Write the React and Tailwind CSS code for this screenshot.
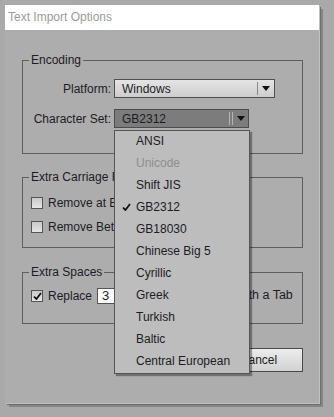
import React from "react";

const CHARSETS = [
  { label: "ANSI" },
  { label: "Unicode", disabled: true },
  { label: "Shift JIS" },
  { label: "GB2312", checked: true },
  { label: "GB18030" },
  { label: "Chinese Big 5" },
  { label: "Cyrillic" },
  { label: "Greek" },
  { label: "Turkish" },
  { label: "Baltic" },
  { label: "Central European" },
];

function Arrow() {
  return (
    <svg width="8" height="5" viewBox="0 0 8 5">
      <path d="M0 0 H8 L4 5 Z" fill="#111" />
    </svg>
  );
}

function Check() {
  return (
    <svg width="9" height="8" viewBox="0 0 9 8">
      <path d="M1 4.5 L3.4 7 L8 1" fill="none" stroke="#111" strokeWidth="1.8" />
    </svg>
  );
}

function Checkbox({ checked }) {
  return (
    <span className="flex h-[12px] w-[12px] shrink-0 items-center justify-center border border-[#555] bg-gradient-to-b from-[#c9c9c9] to-[#e6e6e6]">
      {checked && <Check />}
    </span>
  );
}

function Group({ title, className, children }) {
  return (
    <fieldset className={`ml-[17px] w-[281px] border border-[#5e5e5e] pl-[6px] ${className}`}>
      <legend className="px-[2px] leading-[16px]">{title}</legend>
      <div className="pl-[2px]">{children}</div>
    </fieldset>
  );
}

export default function App() {
  return (
    <div className="h-[417px] w-[334px] bg-[#a9a9a9] p-[5px] font-['Liberation_Sans',Arial,sans-serif] text-[12px] text-[#1c1c24]">
      <div className="relative h-[398px] w-[314px] bg-[#adadad] shadow-[1px_1px_0_#bfbfbf,2px_2px_0_#6e6e6e,4px_4px_0_#858585]">
        <div className="h-[25px] bg-white pl-[3px] leading-[25px] text-[#9b9b9b]">Text Import Options</div>

        <Group title="Encoding" className="mt-[22px] h-[102px]">
          <div className="mt-[11px] flex h-[19px] items-center">
            <span className="w-[80px] text-right">Platform:</span>
            <div className="ml-[3px] flex h-[19px] w-[161px] items-center border border-[#505050] bg-gradient-to-b from-[#e4e4e4] to-[#cdcdcd]">
              <span className="flex-1 pl-[7px]">Windows</span>
              <span className="h-[13px] w-px bg-[#8a8a8a]" />
              <span className="flex w-[16px] justify-center"><Arrow /></span>
            </div>
          </div>
          <div className="relative mt-[11px] flex h-[19px] items-center">
            <span className="w-[80px] text-right">Character Set:</span>
            <div className="ml-[3px] flex h-[19px] w-[135px] items-center border border-[#4c4c4c] bg-[#7c7c7c]">
              <span className="flex-1 pl-[7px]">GB2312</span>
              <span className="h-[13px] w-px bg-[#b5b5b5]" />
              <span className="ml-[2px] h-[13px] w-px bg-[#b5b5b5]" />
              <span className="flex w-[15px] justify-center"><Arrow /></span>
            </div>

            <ul className="absolute left-[83px] top-[21px] z-10 w-[136px] border border-[#555] bg-[#bdbdbd] shadow-[2px_2px_1px_rgba(0,0,0,0.35)]">
              {CHARSETS.map((c) => (
                <li key={c.label} className={`flex h-[22px] items-center pb-[2px] leading-[20px] ${c.disabled ? "text-[#8e8e8e]" : ""}`}>
                  <span className="flex w-[21px] justify-center pl-[2px]">{c.checked && <Check />}</span>
                  {c.label}
                </li>
              ))}
            </ul>
          </div>
        </Group>

        <Group title="Extra Carriage Returns" className="mt-[15px] h-[79px]">
          <label className="mt-[11px] flex h-[13px] items-center gap-[5px]">
            <Checkbox />
            Remove at End of Every Line
          </label>
          <label className="mt-[11px] flex h-[13px] items-center gap-[5px]">
            <Checkbox />
            Remove Between Paragraphs
          </label>
        </Group>

        <Group title="Extra Spaces" className="mt-[16px] h-[60px]">
          <div className="mt-[7px] flex h-[17px] items-center">
            <Checkbox checked />
            <span className="ml-[5px]">Replace</span>
            <span className="ml-[5px] flex h-[16px] w-[36px] items-center border border-[#555] bg-white pl-[4px] text-[13px]">3</span>
            <span className="ml-[12px] text-[12.5px]">or More Spaces with a Tab</span>
          </div>
        </Group>

        <div className="ml-[17px] mt-[24px] flex w-[281px] justify-end gap-[7px]">
          <button className="h-[24px] w-[92px] border border-[#3f3f3f] bg-gradient-to-b from-[#efefef] to-[#cfcfcf]">OK</button>
          <button className="h-[24px] w-[89px] border border-[#4a4a4a] bg-gradient-to-b from-[#ececec] to-[#d2d2d2]">Cancel</button>
        </div>
      </div>
    </div>
  );
}
